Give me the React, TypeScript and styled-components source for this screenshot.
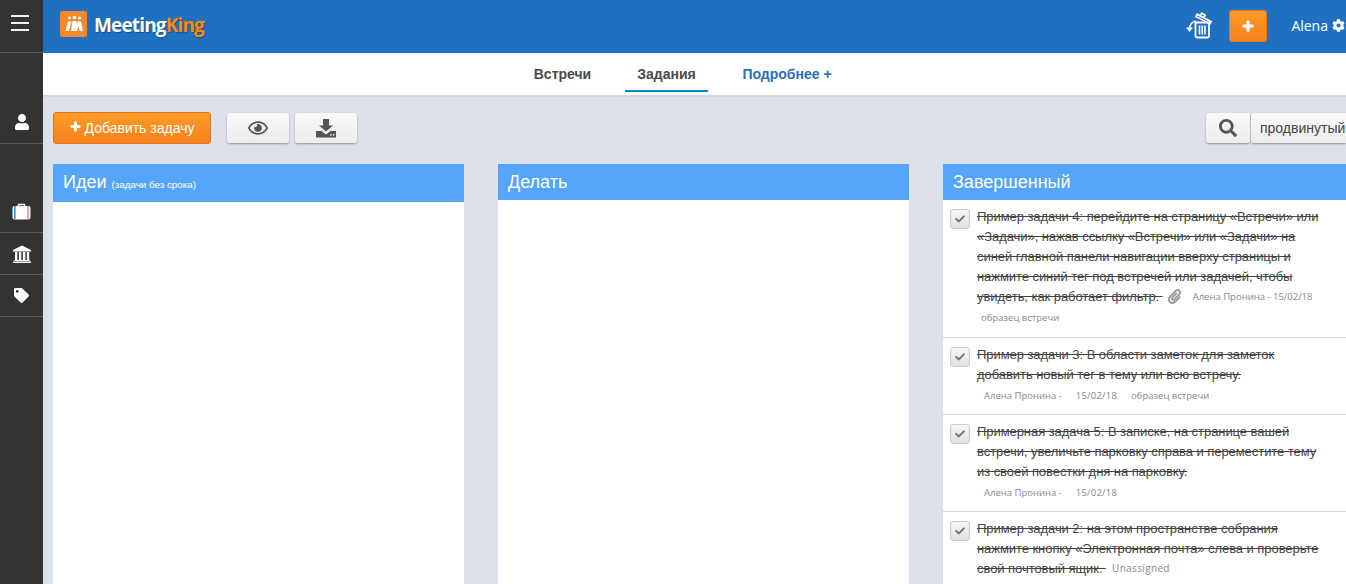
import React from "react";
import styled, { createGlobalStyle } from "styled-components";
import { FaUser, FaTag, FaRegEye, FaSearch, FaCog, FaCheck, FaPaperclip, FaPlus } from "react-icons/fa";

const Global = createGlobalStyle`
  html, body { margin: 0; padding: 0; height: 100%; overflow: hidden; }
  body { font-family: "Liberation Sans", Arial, sans-serif; color: #333; }
  * { box-sizing: border-box; }
`;

const Page = styled.div`
  display: flex;
  width: 1346px;
  height: 584px;
  overflow: hidden;
  background: #dde1e9;
`;
const Sidebar = styled.aside`
  width: 43px;
  flex: none;
  background: #333;
  display: flex;
  flex-direction: column;
`;
const SideCell = styled.div<{ $h: number; $pb?: number }>`
  height: ${(p) => p.$h}px;
  border-bottom: 1px solid #5a5a5a;
  display: flex;
  align-items: ${(p) => (p.$pb !== undefined ? "flex-end" : "center")};
  justify-content: center;
  color: #fff;
  font-size: 16px;
  padding-bottom: ${(p) => p.$pb ?? 0}px;
`;
const Burger = styled.div`
  width: 18px;
  height: 16px;
  margin-left: -3px;
  margin-top: -6px;
  border-top: 2px solid #f2f2f2;
  border-bottom: 2px solid #f2f2f2;
  position: relative;
  &::after {
    content: "";
    position: absolute;
    left: 0;
    right: 0;
    top: 5px;
    height: 2px;
    background: #f2f2f2;
  }
`;
const Main = styled.div`
  flex: 1;
  min-width: 0;
  display: flex;
  flex-direction: column;
`;
const TopBar = styled.header`
  height: 53px;
  flex: none;
  background: #1f70c1;
  display: flex;
  align-items: center;
  padding: 0 0 0 17px;
`;
const LogoMark = styled.div`
  width: 27px;
  height: 26px;
  border-radius: 2px;
  background: #f5882a;
  display: flex;
  align-items: center;
  justify-content: center;
  margin-top: -5px;
`;
const LogoText = styled.div`
  margin-left: 7px;
  font-family: "Open Sans", sans-serif;
  font-weight: 700;
  font-size: 19px;
  letter-spacing: -0.85px;
  color: #fff;
  text-shadow: 1px 1px 1px rgba(0, 0, 0, 0.3);
  margin-top: -4px;
`;
const LogoAccent = styled.span`
  color: #ff8a0c;
`;
const TopRight = styled.div`
  margin-left: auto;
  display: flex;
  align-items: center;
`;
const TrashSlot = styled.div`
  display: flex;
  margin-top: -4px;
`;
const AddSmall = styled.button`
  width: 38px;
  height: 32px;
  margin: -2px 0 0 14px;
  padding: 0;
  border: 1px solid #e0791a;
  border-radius: 3px;
  background: linear-gradient(#fd9c28, #f8801c);
  color: #fff;
  font-size: 12px;
  display: flex;
  align-items: center;
  justify-content: center;
  svg { stroke: #fff; stroke-width: 40px; }
`;
const UserName = styled.div`
  margin: -3px 1px 0 24px;
  font-family: "Open Sans", sans-serif;
  font-size: 14px;
  color: #fff;
  display: flex;
  align-items: center;
  gap: 4px;
`;
const SubNav = styled.nav`
  height: 44px;
  flex: none;
  background: #fff;
  border-bottom: 2px solid #d5d7da;
  display: flex;
  gap: 21px;
  padding-left: 478px;
  font-size: 14px;
  font-weight: 700;
`;
const Tab = styled.a<{ $active?: boolean; $link?: boolean; $w: number }>`
  width: ${(p) => p.$w}px;
  height: 39px;
  display: flex;
  align-items: center;
  justify-content: center;
  padding-top: 4px;
  color: ${(p) => (p.$link ? "#2a6fb8" : "#4a4a4a")};
  border-bottom: 2px solid ${(p) => (p.$active ? "#0a86c9" : "transparent")};
`;
const Content = styled.div`
  flex: 1;
  min-height: 0;
  padding: 15px 0 0 10px;
  display: flex;
  flex-direction: column;
`;
const Toolbar = styled.div`
  display: flex;
  align-items: flex-start;
  height: 52px;
  flex: none;
`;
const AddTask = styled.button`
  width: 158px;
  height: 32px;
  padding: 0;
  border: 1px solid #e0791a;
  border-radius: 3px;
  background: linear-gradient(#fd9c28, #f8801c);
  color: #fff;
  font: 14px "Liberation Sans", Arial, sans-serif;
  display: flex;
  align-items: center;
  justify-content: center;
  gap: 4px;
  svg { font-size: 11px; margin-top: -3px; stroke: #fff; stroke-width: 40px; }
`;
const GrayBtn = styled.button<{ $w: number; $ml?: number }>`
  width: ${(p) => p.$w}px;
  height: 30px;
  padding: 0;
  margin-top: 1px;
  margin-left: ${(p) => p.$ml ?? 0}px;
  border: none;
  border-radius: 3px;
  background: linear-gradient(#fafafa, #ececec);
  box-shadow: 0 1px 2px rgba(0, 0, 0, 0.35);
  color: #555;
  display: flex;
  align-items: center;
  justify-content: center;
  font: 14px "Liberation Sans", Arial, sans-serif;
`;
const SearchWrap = styled.div`
  margin-left: auto;
  display: flex;
  gap: 1px;
`;
const AdvBtn = styled(GrayBtn)`
  border-radius: 3px 0 0 3px;
  justify-content: flex-start;
  padding-left: 9px;
  color: #444;
  white-space: nowrap;
`;
const Board = styled.div`
  flex: 1;
  min-height: 0;
  display: grid;
  grid-template-columns: 411px 411px 411px;
  column-gap: 34px;
`;
const Column = styled.section`
  background: #fff;
  display: flex;
  flex-direction: column;
  min-height: 0;
  overflow: hidden;
`;
const ColHead = styled.h2<{ $h: number }>`
  margin: 0;
  height: ${(p) => p.$h}px;
  flex: none;
  background: #55a6fa;
  color: #fff;
  font-weight: 400;
  font-size: 18px;
  line-height: 36px;
  padding-left: 10px;
  white-space: nowrap;
`;
const HeadNote = styled.small`
  font-size: 9.8px;
`;
const Task = styled.article<{ $h: number }>`
  height: ${(p) => p.$h}px;
  flex: none;
  border-bottom: 1px solid #d5d5d5;
  padding: 7px 0 0 7px;
  display: flex;
  gap: 7px;
`;
const Check = styled.span`
  width: 20px;
  height: 20px;
  flex: none;
  margin-top: 2px;
  border: 1px solid #ccc;
  border-radius: 3px;
  background: linear-gradient(#f6f6f6, #e2e2e2);
  color: #777;
  font-size: 10px;
  display: flex;
  align-items: center;
  justify-content: center;
`;
const TaskBody = styled.div`
  flex: 1;
  min-width: 0;
  margin-top: -1px;
`;
const TaskLine = styled.div`
  display: flex;
  align-items: center;
  height: 20px;
  font-size: 13px;
  letter-spacing: -0.06px;
  white-space: pre;
`;
const Struck = styled.span`
  text-decoration: line-through;
  color: #444;
`;
const Clip = styled.span`
  display: flex;
  color: #999;
  font-size: 15px;
  margin: 0 11px 0 4px;
`;
const Meta = styled.span<{ $wide?: boolean }>`
  font-family: "Open Sans", sans-serif;
  font-size: 9.5px;
  letter-spacing: ${(p) => (p.$wide ? "0.2px" : "0")};
  color: #888;
`;
const Unassigned = styled(Meta)`
  font-size: 10px;
  letter-spacing: 0.35px;
  margin-left: 6px;
`;
const MetaRow = styled.div<{ $ml: number; $gap?: number }>`
  display: flex;
  gap: ${(p) => p.$gap ?? 0}px;
  margin-left: ${(p) => p.$ml}px;
  margin-top: 3px;
  line-height: 18px;
`;

const Logo = () => (
  <svg width="20" height="18" viewBox="0 0 20 18" fill="#fff">
    <circle cx="5.500" cy="3" r="1.600" />
    <circle cx="10.500" cy="2.500" r="1.800" />
    <circle cx="15.500" cy="3" r="1.600" />
    <path d="M4 6.500h3.500L5 16H1.500zM8.500 6h4v4l-2.500 6H7zM13.500 6.500h3.500l2 9.500h-3.500l-1-5-1.500 5h-2.500z" />
  </svg>
);
const TrashRestore = () => (
  <svg width="30" height="30" viewBox="0 0 30 30" fill="none" stroke="#fff" strokeWidth="1.6">
    <path d="M10.500 12.500h13.500v13.500a1.500 1.500 0 0 1-1.500 1.500h-10.500a1.500 1.500 0 0 1-1.500-1.500z" strokeWidth="1.800" />
    <path d="M14.500 15.500v9M17.300 15.500v9M20 15.500v9" />
    <path d="M11 6.500l14 7.500 1.200-2.300-14-7.500zM15.500 5.500l1.300-2.300 3.400 2-1.300 2.200" />
    <path d="M4.500 19c.3-4 2.500-7 6-8" />
    <path d="M1 17.500l3.500 4.500 3.500-4.500z" fill="#fff" stroke="none" />
  </svg>
);
const Tray = () => (
  <svg width="20" height="19" viewBox="0 0 20 19" fill="#555">
    <path d="M7 0h6v6.500h4l-7 6-7-6h4z" />
    <path d="M0 12h5.500l4.500 3.500 4.500-3.500H20v6.500H0z" />
    <circle cx="15" cy="15.800" r="0.900" fill="#eee" />
    <circle cx="17.700" cy="15.800" r="0.900" fill="#eee" />
  </svg>
);
const Suitcase = () => (
  <svg width="19" height="17" viewBox="0 0 19 17">
    <path d="M6.500 3.500V1.500h6v2" fill="none" stroke="#fff" strokeWidth="1.400" />
    <rect x="0.500" y="3" width="18" height="13.500" rx="2" fill="#fff" />
    <rect x="2" y="3" width="1" height="13.500" fill="#3a9ad9" />
    <rect x="3" y="3" width="1" height="13.500" fill="#e8a33d" />
    <rect x="15.500" y="3" width="1" height="13.500" fill="#d9534f" />
  </svg>
);
const Bank = () => (
  <svg width="20" height="18" viewBox="0 0 20 18">
    <path d="M10 0.500L19 5v1.500H1V5z" fill="#fff" />
    <path d="M2 15h16v1H2zM1 16.500h18V18H1z" fill="#fff" />
    <rect x="3" y="7" width="2.200" height="8" fill="#fff" />
    <rect x="7" y="7" width="2.200" height="8" fill="#fff" />
    <rect x="11" y="7" width="2.200" height="8" fill="#fff" />
    <rect x="15" y="7" width="2.200" height="8" fill="#fff" />
    <rect x="5.500" y="7" width="0.800" height="8" fill="#c76a5a" />
    <rect x="9.500" y="7" width="0.800" height="8" fill="#3a9ad9" />
    <rect x="13.500" y="7" width="0.800" height="8" fill="#d9953d" />
  </svg>
);

export default function App() {
  return (
    <Page>
      <Global />
      <Sidebar>
        <SideCell $h={53}><Burger /></SideCell>
        <SideCell $h={91} $pb={13}><FaUser /></SideCell>
        <SideCell $h={89} $pb={12}><Suitcase /></SideCell>
        <SideCell $h={42}><Bank /></SideCell>
        <SideCell $h={42}><FaTag style={{ fontSize: 15 }} /></SideCell>
      </Sidebar>
      <Main>
        <TopBar>
          <LogoMark><Logo /></LogoMark>
          <LogoText>Meeting<LogoAccent>King</LogoAccent></LogoText>
          <TopRight>
            <TrashSlot><TrashRestore /></TrashSlot>
            <AddSmall aria-label="add"><FaPlus /></AddSmall>
            <UserName>Alena <FaCog size={13} /></UserName>
          </TopRight>
        </TopBar>
        <SubNav>
          <Tab $w={83}>Встречи</Tab>
          <Tab $w={83} $active>Задания</Tab>
          <Tab $w={116} $link>Подробнее +</Tab>
        </SubNav>
        <Content>
          <Toolbar>
            <AddTask><FaPlus /> Добавить задачу</AddTask>
            <GrayBtn $w={62} $ml={16}><FaRegEye size={20} /></GrayBtn>
            <GrayBtn $w={62} $ml={6}><Tray /></GrayBtn>
            <SearchWrap>
              <GrayBtn $w={44}><FaSearch size={18} /></GrayBtn>
              <AdvBtn $w={95}>продвинутый</AdvBtn>
            </SearchWrap>
          </Toolbar>
          <Board>
            <Column>
              <ColHead $h={38}>Идеи <HeadNote>(задачи без срока)</HeadNote></ColHead>
            </Column>
            <Column>
              <ColHead $h={36}>Делать</ColHead>
            </Column>
            <Column>
              <ColHead $h={36}>Завершенный</ColHead>
              <Task $h={138}>
                <Check><FaCheck /></Check>
                <TaskBody>
                  <TaskLine><Struck>Пример задачи 4: перейдите на страницу «Встречи» или</Struck></TaskLine>
                  <TaskLine><Struck>«Задачи», нажав ссылку «Встречи» или «Задачи» на</Struck></TaskLine>
                  <TaskLine><Struck>синей главной панели навигации вверху страницы и</Struck></TaskLine>
                  <TaskLine><Struck>нажмите синий тег под встречей или задачей, чтобы</Struck></TaskLine>
                  <TaskLine>
                    <Struck>увидеть, как работает фильтр. </Struck>
                    <Clip><FaPaperclip /></Clip>
                    <Meta>Алена Пронина - 15/02/18</Meta>
                  </TaskLine>
                  <MetaRow $ml={4}><Meta>образец встречи</Meta></MetaRow>
                </TaskBody>
              </Task>
              <Task $h={77}>
                <Check><FaCheck /></Check>
                <TaskBody>
                  <TaskLine><Struck>Пример задачи 3: В области заметок для заметок</Struck></TaskLine>
                  <TaskLine><Struck>добавить новый тег в тему или всю встречу.</Struck></TaskLine>
                  <MetaRow $ml={7} $gap={14}>
                    <Meta>Алена Пронина -</Meta><Meta $wide>15/02/18</Meta><Meta>образец встречи</Meta>
                  </MetaRow>
                </TaskBody>
              </Task>
              <Task $h={97}>
                <Check><FaCheck /></Check>
                <TaskBody>
                  <TaskLine><Struck>Примерная задача 5: В записке, на странице вашей</Struck></TaskLine>
                  <TaskLine><Struck>встречи, увеличьте парковку справа и переместите тему</Struck></TaskLine>
                  <TaskLine><Struck>из своей повестки дня на парковку.</Struck></TaskLine>
                  <MetaRow $ml={7} $gap={14}>
                    <Meta>Алена Пронина -</Meta><Meta $wide>15/02/18</Meta>
                  </MetaRow>
                </TaskBody>
              </Task>
              <Task $h={80}>
                <Check><FaCheck /></Check>
                <TaskBody>
                  <TaskLine><Struck>Пример задачи 2: на этом пространстве собрания</Struck></TaskLine>
                  <TaskLine><Struck>нажмите кнопку «Электронная почта» слева и проверьте</Struck></TaskLine>
                  <TaskLine>
                    <Struck>свой почтовый ящик. </Struck>
                    <Unassigned>Unassigned</Unassigned>
                  </TaskLine>
                </TaskBody>
              </Task>
            </Column>
          </Board>
        </Content>
      </Main>
    </Page>
  );
}
